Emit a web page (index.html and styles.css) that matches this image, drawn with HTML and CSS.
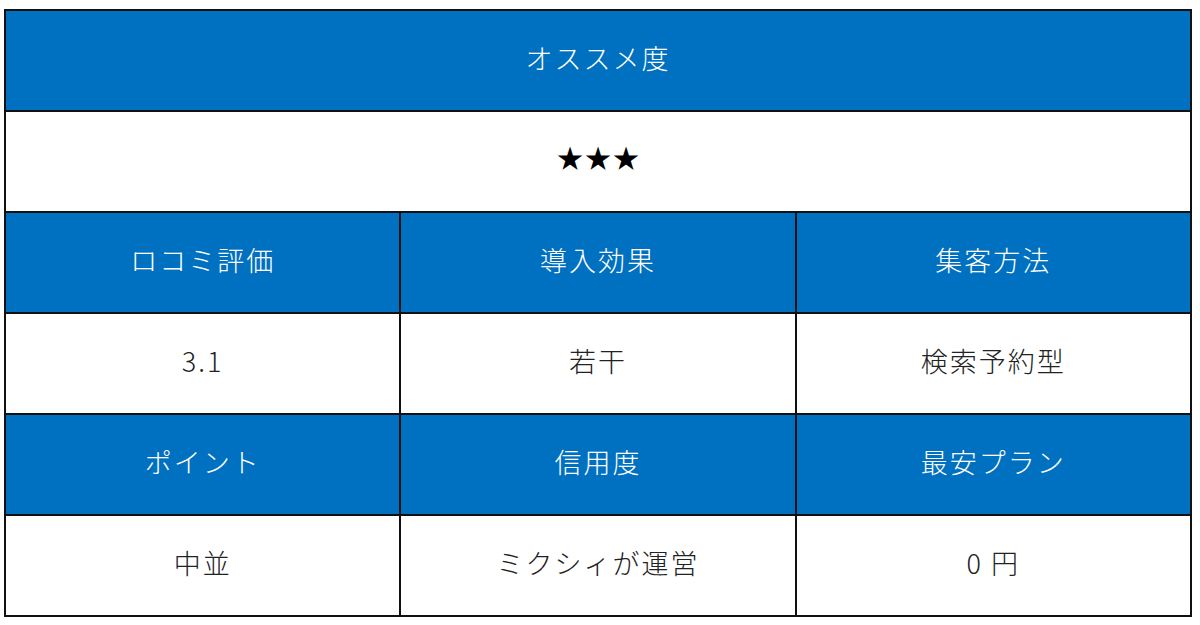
FILE: index.html
```html
<!DOCTYPE html>
<html lang="ja">
<head>
<meta charset="utf-8">
<link rel="stylesheet" href="styles.css">
</head>
<body>
<table class="spec">
  <tr class="head"><td colspan="3">オススメ度</td></tr>
  <tr class="body"><td colspan="3" class="stars">★★★</td></tr>
  <tr class="head"><td>ロコミ評価</td><td>導入効果</td><td>集客方法</td></tr>
  <tr class="body"><td>3.1</td><td>若干</td><td>検索予約型</td></tr>
  <tr class="head"><td>ポイント</td><td>信用度</td><td>最安プラン</td></tr>
  <tr class="body"><td>中並</td><td>ミクシィが運営</td><td>0 円</td></tr>
</table>
</body>
</html>
```
FILE: styles.css
```css
html, body {
  margin: 0;
  padding: 0;
  background: #fff;
}
body {
  padding: 9px 0 0 4px;
  font-family: "Noto Sans CJK JP", "Noto Sans", sans-serif;
  font-weight: 300;
}
.spec {
  border-collapse: collapse;
  width: 1188px;
  table-layout: fixed;
  border: 2px solid #111;
}
.spec td {
  border: 2px solid #111;
  height: 93px;
  padding: 0 0 6px 0;
  text-align: center;
  vertical-align: middle;
  font-size: 27px;
  letter-spacing: 2px;
}
.head td {
  background: #0070c0;
  color: #fff;
}
.body td {
  background: #fff;
  color: #222;
}
.spec .stars {
  font-family: "DejaVu Sans", sans-serif;
  color: #000;
  font-size: 28px;
  letter-spacing: 0;
}
```
